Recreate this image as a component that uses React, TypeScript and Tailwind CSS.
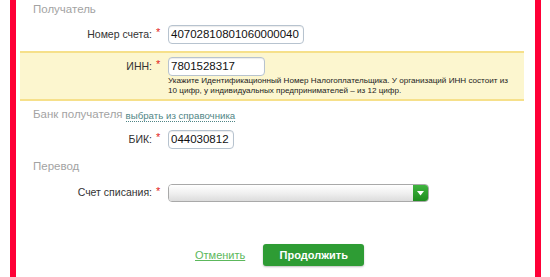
const Label = ({ text, w = 136 }: { text: string; w?: number }) => (
  <div className="flex items-center shrink-0">
    <span className="text-right text-[10.5px] text-[#333]" style={{ width: w }}>
      {text}
    </span>
    <span className="w-4 pl-[4px] text-[11px] leading-none text-[#e2231a] -mt-[4px]">*</span>
  </div>
);

const Input = ({ value, w }: { value: string; w: string }) => (
  <div
    className={`${w} h-[19px] rounded-[4px] border border-[#b7c3cf] bg-white px-[2px] flex items-center text-[11.5px] text-[#111] shadow-[inset_0_1px_1px_rgba(0,0,0,0.08)]`}
  >
    {value}
  </div>
);

const Heading = ({ children }: { children: React.ReactNode }) => (
  <div className="h-[20px] flex items-center pl-[17px] text-[11.5px] text-[#a3a3a3]">{children}</div>
);

export default function App() {
  return (
    <div className="w-[550px] h-[277px] bg-white overflow-hidden font-[family-name:'Liberation_Sans',Arial,sans-serif]">
      <div className="ml-[10px] w-[531px] h-full border-x-[6px] border-[#ff0037] pr-[11px]">
        <Heading>Получатель</Heading>

        <div className="mt-[5px] flex items-center">
          <Label text="Номер счета:" />
          <Input value="40702810801060000040" w="w-[136px]" />
        </div>

        <div className="mt-[7px] ml-[4px] h-[50px] border-y-2 border-[#f6e08a] bg-[#fcf6cf] pt-[4px]">
          <div className="flex items-center">
            <Label text="ИНН:" w={132} />
            <Input value="7801528317" w="w-[97px]" />
          </div>
          <div className="ml-[148px] text-[8.1px] leading-[10px] text-[#222]">
            Укажите Идентификационный Номер Налогоплательщика. У организаций ИНН состоит из
            <br />
            10 цифр, у индивидуальных предпринимателей – из 12 цифр.
          </div>
        </div>

        <div className="mt-[4px] flex items-center">
          <Heading>Банк получателя</Heading>
          <span className="ml-[3px] mt-[1px] text-[9.7px] text-[#4f8585] border-b border-dotted border-[#4f8585] leading-[11px]">
            выбрать из справочника
          </span>
        </div>

        <div className="mt-[5px] flex items-center">
          <Label text="БИК:" />
          <Input value="044030812" w="w-[66px]" />
        </div>

        <div className="mt-[8px]">
          <Heading>Перевод</Heading>
        </div>

        <div className="mt-[7px] flex items-center">
          <Label text="Счет списания:" />
          <div className="w-[261px] h-[18px] flex rounded-[4px] overflow-hidden border border-[#a9a9a9]">
            <div className="flex-1 bg-gradient-to-b from-white via-[#f0f0f0] to-[#dcdcdc]" />
            <div className="w-[15px] bg-gradient-to-b from-[#3fb53f] to-[#1e8c1e] flex items-center justify-center">
              <svg width="7" height="5" viewBox="0 0 7 5">
                <path d="M0 0h7L3.5 4.5z" fill="#fff" />
              </svg>
            </div>
          </div>
        </div>

        <div className="mt-[42px] flex items-center">
          <span className="ml-[179px] text-[11px] text-[#5cb85c] underline">Отменить</span>
          <button className="ml-[18px] w-[101px] h-[22px] rounded-[3px] bg-[#2e9c34] text-white text-[11px] font-bold shadow-[0_1px_2px_rgba(0,0,0,0.25)]">
            Продолжить
          </button>
        </div>
      </div>
    </div>
  );
}
